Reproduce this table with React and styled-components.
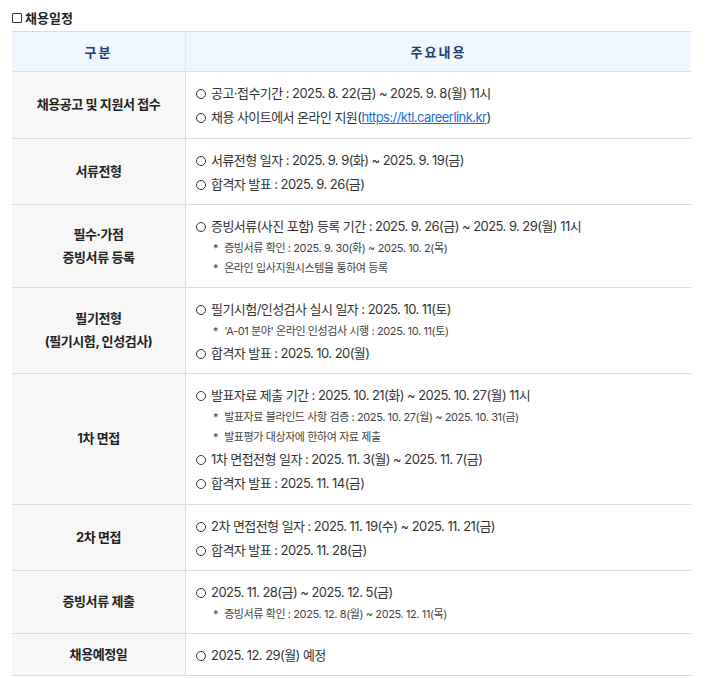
import React from 'react';
import styled, { createGlobalStyle } from 'styled-components';

const GlobalStyle = createGlobalStyle`
  body {
    margin: 0;
    background: #fff;
    font-family: Inter, "Noto Sans CJK KR", "Noto Sans", sans-serif;
    color: #333;
  }
`;

const Wrap = styled.div`
  padding: 8px 14px 0 12px;
`;

const Title = styled.h3`
  margin: 0 0 3px;
  font-size: 13px;
  font-weight: 700;
  color: #222;
  line-height: 20px;
  display: flex;
  align-items: center;
  gap: 3px;
  .box {
    width: 8px;
    height: 8px;
    border: 1px solid #333;
    border-radius: 1px;
  }
`;

const Table = styled.div`
  display: grid;
  grid-template-columns: 173px 1fr;
  border-top: 1px solid #d6dbe3;
`;

const HeadCell = styled.div`
  height: 39px;
  display: flex;
  align-items: center;
  justify-content: center;
  background: #f0f6fd;
  border-bottom: 1px solid #dcdfe4;
  border-left: ${p => (p.$first ? 'none' : '1px solid #e2e5ea')};
  font-size: 13px;
  font-weight: 700;
  color: #1f3b78;
  letter-spacing: 2px;
`;

const Label = styled.div`
  display: flex;
  align-items: center;
  justify-content: center;
  text-align: center;
  background: #f7f7f7;
  border-bottom: 1px solid #dcdcdc;
  font-size: 13px;
  font-weight: 700;
  color: #222;
  line-height: 23px;
  letter-spacing: -0.4px;
`;

const Content = styled.div`
  padding: 9px 10px 8.5px;
  border-left: 1px solid #e2e2e2;
  border-bottom: 1px solid #dcdcdc;
`;

const Line = styled.div`
  font-size: 13px;
  line-height: 24px;
  color: #333;
  letter-spacing: -0.55px;
  &::before {
    content: "";
    display: inline-block;
    box-sizing: border-box;
    width: 10px;
    height: 10px;
    border: 1.3px solid #333;
    border-radius: 50%;
    margin-right: 5px;
    vertical-align: -1px;
  }
  a {
    color: #1a6fd6;
    text-decoration: underline;
  }
`;

const Sub = styled.div`
  font-size: 11px;
  line-height: 20px;
  color: #444;
  padding-left: 17px;
  letter-spacing: -0.4px;
  &::before {
    content: "*";
    margin-right: 6px;
  }
`;

const rows = [
  {
    label: ['채용공고 및 지원서 접수'],
    items: [
      ['m', '공고·접수기간 : 2025. 8. 22(금) ~ 2025. 9. 8(월) 11시'],
      ['link'],
    ],
  },
  {
    label: ['서류전형'],
    items: [
      ['m', '서류전형 일자 : 2025. 9. 9(화) ~ 2025. 9. 19(금)'],
      ['m', '합격자 발표 : 2025. 9. 26(금)'],
    ],
  },
  {
    label: ['필수·가점', '증빙서류 등록'],
    items: [
      ['m', '증빙서류(사진 포함) 등록 기간 : 2025. 9. 26(금) ~ 2025. 9. 29(월) 11시'],
      ['s', '증빙서류 확인 : 2025. 9. 30(화) ~ 2025. 10. 2(목)'],
      ['s', '온라인 입사지원시스템을 통하여 등록'],
    ],
  },
  {
    label: ['필기전형', '(필기시험, 인성검사)'],
    items: [
      ['m', '필기시험/인성검사 실시 일자 : 2025. 10. 11(토)'],
      ['s', "'A-01 분야' 온라인 인성검사 시행 : 2025. 10. 11(토)"],
      ['m', '합격자 발표 : 2025. 10. 20(월)'],
    ],
  },
  {
    label: ['1차 면접'],
    items: [
      ['m', '발표자료 제출 기간 : 2025. 10. 21(화) ~ 2025. 10. 27(월) 11시'],
      ['s', '발표자료 블라인드 사항 검증 : 2025. 10. 27(월) ~ 2025. 10. 31(금)'],
      ['s', '발표평가 대상자에 한하여 자료 제출'],
      ['m', '1차 면접전형 일자 : 2025. 11. 3(월) ~ 2025. 11. 7(금)'],
      ['m', '합격자 발표 : 2025. 11. 14(금)'],
    ],
  },
  {
    label: ['2차 면접'],
    items: [
      ['m', '2차 면접전형 일자 : 2025. 11. 19(수) ~ 2025. 11. 21(금)'],
      ['m', '합격자 발표 : 2025. 11. 28(금)'],
    ],
  },
  {
    label: ['증빙서류 제출'],
    items: [
      ['m', '2025. 11. 28(금) ~ 2025. 12. 5(금)'],
      ['s', '증빙서류 확인 : 2025. 12. 8(월) ~ 2025. 12. 11(목)'],
    ],
  },
  {
    label: ['채용예정일'],
    items: [['m', '2025. 12. 29(월) 예정']],
  },
];

const renderItem = ([kind, text], i) => {
  if (kind === 'link') {
    return (
      <Line key={i}>
        채용 사이트에서 온라인 지원(<a href="https://ktl.careerlink.kr">https://ktl.careerlink.kr</a>)
      </Line>
    );
  }
  if (kind === 's') return <Sub key={i}>{text}</Sub>;
  return <Line key={i}>{text}</Line>;
};

const App = () => (
  <Wrap>
    <GlobalStyle />
    <Title>
      <span className="box" />
      채용일정
    </Title>
    <Table>
      <HeadCell $first>구분</HeadCell>
      <HeadCell>주요내용</HeadCell>
      {rows.map((row, idx) => (
        <React.Fragment key={idx}>
          <Label>
            <div>
              {row.label.map((l, j) => (
                <div key={j}>{l}</div>
              ))}
            </div>
          </Label>
          <Content>{row.items.map(renderItem)}</Content>
        </React.Fragment>
      ))}
    </Table>
  </Wrap>
);

export default App;
